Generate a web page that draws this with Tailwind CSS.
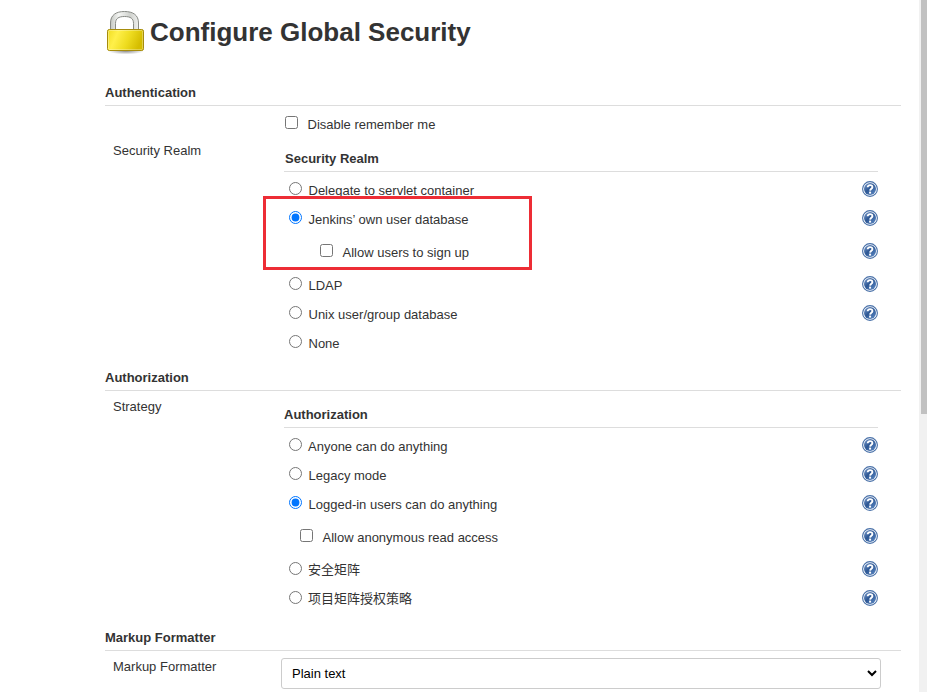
<!DOCTYPE html>
<html lang="en">
<head>
<meta charset="utf-8">
<title>Configure Global Security</title>
<script src="https://cdn.jsdelivr.net/npm/@tailwindcss/browser@4"></script>
</head>
<body class="flex h-[692px] w-[927px] overflow-hidden bg-white font-['Liberation_Sans','Noto_Sans_CJK_SC',sans-serif] text-[13px] leading-4 text-[#333]">
<svg class="size-0 shrink-0" width="0" height="0">
  <defs>
    <linearGradient id="blue" x1="0" y1="0" x2="1" y2="1"><stop offset="0" stop-color="#7fa0d0"/><stop offset=".45" stop-color="#2d5794"/><stop offset="1" stop-color="#5f8cc8"/></linearGradient>
  </defs>
  <symbol id="help" viewBox="0 0 16 16">
    <circle cx="8" cy="8" r="7.400" fill="#fff" stroke="#4870a8" stroke-width="1.100"/>
    <circle cx="8" cy="8" r="6" fill="url(#blue)"/>
    <path d="M5.700 6.200C5.600 3.500 10.500 3.400 10.400 6.100C10.300 7.700 8.200 7.700 8.100 9.600" fill="none" stroke="#fff" stroke-width="1.900"/>
    <rect x="7.100" y="10.600" width="2" height="2" fill="#fff"/>
  </symbol>
</svg>
<main class="w-[919px] shrink-0 pl-[105px]">
  <header class="flex h-[82px] items-start">
    <svg class="ml-px mt-[9px] h-[46px] w-[40px] shrink-0" viewBox="0 0 40 46">
      <defs>
        <linearGradient id="gold" x1="0" y1="0" x2="1" y2=".25"><stop offset="0" stop-color="#f0dc20"/><stop offset=".3" stop-color="#fff04a"/><stop offset=".65" stop-color="#eedc20"/><stop offset="1" stop-color="#d5bd00"/></linearGradient>
        <linearGradient id="steel" x1="0" y1="0" x2="1" y2="0"><stop offset="0" stop-color="#c4c7c2"/><stop offset=".3" stop-color="#f5f6f4"/><stop offset=".7" stop-color="#cfd1cd"/><stop offset="1" stop-color="#eff0ee"/></linearGradient>
        <radialGradient id="shade"><stop offset="0" stop-color="#000" stop-opacity=".45"/><stop offset="1" stop-color="#000" stop-opacity="0"/></radialGradient>
      </defs>
      <ellipse cx="20" cy="42" rx="18" ry="3.4" fill="url(#shade)"/>
      <path d="M4.500 22V14C4.500 6 10 2.500 18.500 2.500S32.500 6 32.500 14V22H27.500V14.500C27.500 9.500 24.500 7.500 18.500 7.500S9.500 9.500 9.500 14.500V22Z" fill="url(#steel)" stroke="#888a85"/>
      <rect x="1.500" y="20.500" width="36" height="21" rx="1.800" fill="url(#gold)" stroke="#a68c0c"/>
      <rect x="2.500" y="21.500" width="34" height="19" rx="1" fill="none" stroke="#fff" stroke-opacity=".3"/>
    </svg>
    <h1 class="ml-1 mt-4 whitespace-nowrap text-[26px] font-bold leading-8">Configure Global Security</h1>
  </header>

  <section class="w-[796px]">
    <h2 class="h-6 border-b border-[#ddd] pt-[3px] font-bold">Authentication</h2>
    <div class="flex h-[251px]">
      <div class="w-[180px] shrink-0 pl-2 pt-[37px]">Security Realm</div>
      <div class="w-[593px]">
        <label class="flex h-[42px] items-start"><input type="checkbox" class="mt-[10px] size-[13px]"><span class="ml-[9.5px] mt-[11px]">Disable remember me</span></label>
        <h3 class="-ml-px h-6 border-b border-[#ddd] pl-px pt-[3px] font-bold">Security Realm</h3>
        <div class="relative pt-[3px]">
          <div class="flex h-[29px] items-start justify-between"><label class="flex items-start pl-1"><input type="radio" name="realm" class="mt-[7px] size-[13px]"><span class="ml-[6.5px] mt-2">Delegate to servlet container</span></label><svg class="mt-[6px] size-4"><use href="#help"/></svg></div>
          <div class="flex h-[29px] items-start justify-between"><label class="flex items-start pl-1"><input type="radio" name="realm" checked class="mt-[7px] size-[13px]"><span class="ml-[6.5px] mt-2">Jenkins’ own user database</span></label><svg class="mt-[6px] size-4"><use href="#help"/></svg></div>
          <div class="flex h-[37px] items-start justify-between"><label class="flex items-start pl-[35px]"><input type="checkbox" class="mt-[11px] size-[13px]"><span class="ml-[9.5px] mt-3">Allow users to sign up</span></label><svg class="mt-[10px] size-4"><use href="#help"/></svg></div>
          <div class="flex h-[29px] items-start justify-between"><label class="flex items-start pl-1"><input type="radio" name="realm" class="mt-[7px] size-[13px]"><span class="ml-[6.5px] mt-2">LDAP</span></label><svg class="mt-[6px] size-4"><use href="#help"/></svg></div>
          <div class="flex h-[29px] items-start justify-between"><label class="flex items-start pl-1"><input type="radio" name="realm" class="mt-[7px] size-[13px]"><span class="ml-[6.5px] mt-2">Unix user/group database</span></label><svg class="mt-[6px] size-4"><use href="#help"/></svg></div>
          <div class="flex h-[29px] items-start"><label class="flex items-start pl-1"><input type="radio" name="realm" class="mt-[7px] size-[13px]"><span class="ml-[6.5px] mt-2">None</span></label></div>
          <div class="pointer-events-none absolute -left-[22px] top-6 h-[74px] w-[269px] border-3 border-[#ed2d35]"></div>
        </div>
      </div>
    </div>
  </section>

  <section class="w-[796px]">
    <h2 class="mt-[10px] h-6 border-b border-[#ddd] pt-[3px] font-bold">Authorization</h2>
    <div class="flex h-[236px]">
      <div class="w-[180px] shrink-0 pl-2 pt-2">Strategy</div>
      <div class="w-[593px] pt-[13px]">
        <h3 class="-ml-px h-6 border-b border-[#ddd] pt-[3px] font-bold">Authorization</h3>
        <div class="pt-[3px]">
          <div class="flex h-[29px] items-start justify-between"><label class="flex items-start pl-1"><input type="radio" name="strategy" class="mt-[7px] size-[13px]"><span class="ml-[6px] mt-2">Anyone can do anything</span></label><svg class="mt-[6px] size-4"><use href="#help"/></svg></div>
          <div class="flex h-[29px] items-start justify-between"><label class="flex items-start pl-1"><input type="radio" name="strategy" class="mt-[7px] size-[13px]"><span class="ml-[6.5px] mt-2">Legacy mode</span></label><svg class="mt-[6px] size-4"><use href="#help"/></svg></div>
          <div class="flex h-[29px] items-start justify-between"><label class="flex items-start pl-1"><input type="radio" name="strategy" checked class="mt-[7px] size-[13px]"><span class="ml-[6.5px] mt-2">Logged-in users can do anything</span></label><svg class="mt-[6px] size-4"><use href="#help"/></svg></div>
          <div class="flex h-[37px] items-start justify-between"><label class="flex items-start pl-[15px]"><input type="checkbox" class="mt-[11px] size-[13px]"><span class="ml-[9.5px] mt-3">Allow anonymous read access</span></label><svg class="mt-[10px] size-4"><use href="#help"/></svg></div>
          <div class="flex h-[29px] items-start justify-between"><label class="flex items-start pl-1"><input type="radio" name="strategy" class="mt-[7px] size-[13px]"><span class="ml-[6px] mt-[7px]">安全矩阵</span></label><svg class="mt-[6px] size-4"><use href="#help"/></svg></div>
          <div class="flex h-[29px] items-start justify-between"><label class="flex items-start pl-1"><input type="radio" name="strategy" class="mt-[7px] size-[13px]"><span class="ml-[6px] mt-[7px]">项目矩阵授权策略</span></label><svg class="mt-[6px] size-4"><use href="#help"/></svg></div>
        </div>
      </div>
    </div>
  </section>

  <section class="w-[796px]">
    <h2 class="h-6 border-b border-[#ddd] pt-[3px] font-bold">Markup Formatter</h2>
    <div class="flex">
      <div class="w-[176px] shrink-0 pl-2 pt-2">Markup Formatter</div>
      <select class="mt-[7px] h-[31px] w-[600px] rounded-[3px] border border-[#ccc] bg-white px-[6px] text-[13px] text-black"><option>Plain text</option></select>
    </div>
  </section>
</main>
<div class="h-full w-2 shrink-0 bg-[#f1f1f1] pl-[2px]"><div class="h-[414px] bg-[#c1c1c1]"></div></div>
</body>
</html>
